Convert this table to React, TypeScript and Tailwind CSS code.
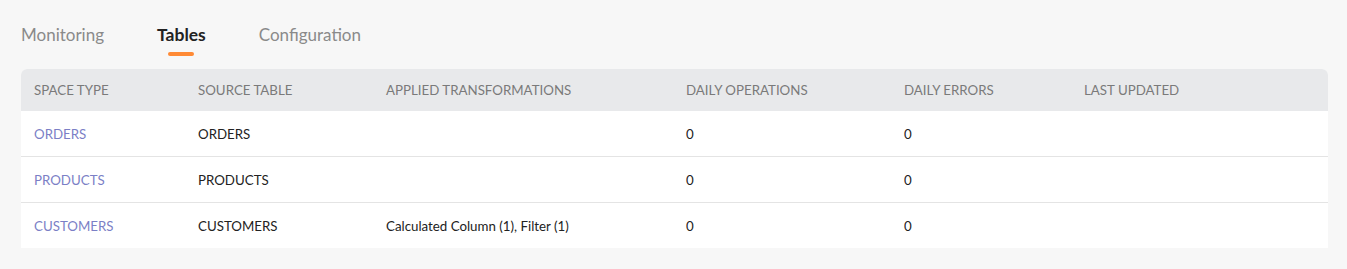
import React from 'react'

const cols = 'grid grid-cols-[164px_188px_300px_218px_180px_1fr]'

const rows = [
  { space: 'ORDERS', source: 'ORDERS', transforms: '', ops: '0', errors: '0', updated: '' },
  { space: 'PRODUCTS', source: 'PRODUCTS', transforms: '', ops: '0', errors: '0', updated: '' },
  {
    space: 'CUSTOMERS',
    source: 'CUSTOMERS',
    transforms: 'Calculated Column (1), Filter (1)',
    ops: '0',
    errors: '0',
    updated: '',
  },
]

const headers = [
  'SPACE TYPE',
  'SOURCE TABLE',
  'APPLIED TRANSFORMATIONS',
  'DAILY OPERATIONS',
  'DAILY ERRORS',
  'LAST UPDATED',
]

export default function App() {
  return (
    <div className="min-h-[269px] bg-[#f7f7f7] pl-[21px] pr-[19px] pt-[24px] pb-[21px] font-['Lato',sans-serif]">
      {/* Tabs */}
      <div className="flex items-start gap-[53px]">
        <div className="text-[17px] leading-[22px] text-[#8a8a8a]">Monitoring</div>
        <div className="flex flex-col items-center">
          <div className="text-[17.5px] leading-[22px] font-bold text-[#222]">Tables</div>
          <div className="mt-[6px] h-[4px] w-[26px] rounded-full bg-[#ff8a35]" />
        </div>
        <div className="text-[17px] leading-[22px] text-[#8a8a8a]">Configuration</div>
      </div>

      {/* Table */}
      <div className="mt-[13px] overflow-hidden rounded-t-[6px] bg-white">
        <div className={`${cols} h-[42px] items-center pt-[2px] bg-[#e8e9eb]`}>
          {headers.map((h) => (
            <div key={h} className="pl-[13px] text-[13.3px] text-[#7a7a7a]">
              {h}
            </div>
          ))}
        </div>
        {rows.map((r, i) => (
          <div
            key={r.space}
            className={`${cols} h-[45px] items-center pt-[2px] text-[13.3px] text-[#222] ${
              i > 0 ? 'border-t border-[#e4e4e4] h-[46px]' : ''
            }`}
          >
            <div className="pl-[13px] text-[#7b7fc6]">{r.space}</div>
            <div className="pl-[13px]">{r.source}</div>
            <div className="pl-[13px]">{r.transforms}</div>
            <div className="pl-[13px]">{r.ops}</div>
            <div className="pl-[13px]">{r.errors}</div>
            <div className="pl-[13px]">{r.updated}</div>
          </div>
        ))}
      </div>
    </div>
  )
}
